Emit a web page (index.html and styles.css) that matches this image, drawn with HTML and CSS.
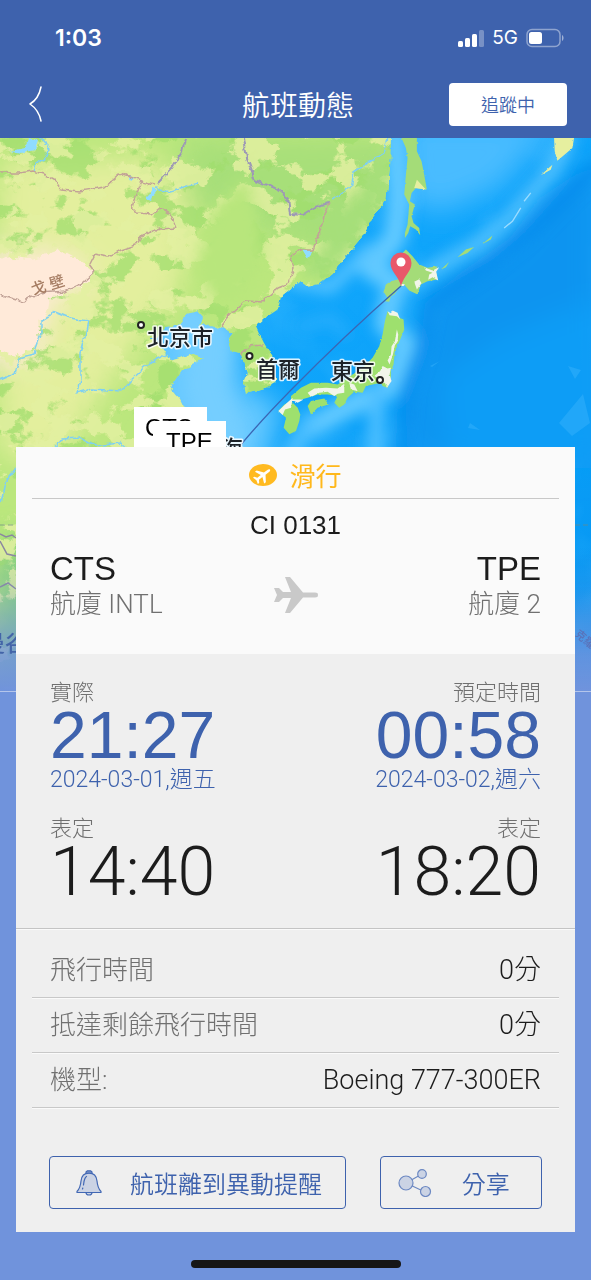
FILE: index.html
```html
<!DOCTYPE html>
<html lang="zh-Hant">
<head>
<meta charset="utf-8">
<meta name="viewport" content="width=device-width, initial-scale=1">
<title>航班動態</title>
<link rel="stylesheet" href="styles.css">
</head>
<body>
<div class="app">
  <header class="header">
    <div class="status-bar">
      <span class="clock">1:03</span>
      <div class="signals">
        <svg width="26" height="18" viewBox="0 0 26 18" fill="#fff" aria-hidden="true">
          <rect x="0" y="12" width="5" height="6" rx="1.5"/><rect x="7" y="9" width="5" height="9" rx="1.5"/><rect x="14" y="5" width="5" height="13" rx="1.5"/><rect x="21" y="1" width="5" height="17" rx="1.5" opacity=".3"/>
        </svg>
        <span class="network">5G</span>
        <svg width="38" height="20" viewBox="0 0 38 20" aria-hidden="true">
          <rect x="1" y="1.500" width="33" height="17" rx="5" fill="none" stroke="#fff" stroke-opacity=".42" stroke-width="1.500"/>
          <rect x="3" y="4" width="13" height="12" rx="2.500" fill="#fff"/>
          <path d="M36 7c2 1 2 5 0 6z" fill="#fff" opacity=".5"/>
        </svg>
      </div>
    </div>
    <div class="nav-bar">
      <button class="back" type="button" aria-label="返回">
        <svg width="14" height="36" viewBox="0 0 14 36" fill="none" stroke="#fff" stroke-width="1.500" stroke-linecap="round" stroke-linejoin="round" aria-hidden="true"><path d="M12 1C10.500 8.500 7 14.500 1 18c6 4 9.500 9.500 11 17"/></svg>
      </button>
      <h1 class="title">航班動態</h1>
      <button class="tracking" type="button">追蹤中</button>
    </div>
  </header>

  <main class="stage">
    <svg class="map" viewBox="0 0 591 554" preserveAspectRatio="xMidYMin slice" role="img" aria-label="航線地圖">
      <defs>
        <linearGradient id="sea" x1="0" y1="0" x2="1" y2="1"><stop offset="0" stop-color="#35b8ff"/><stop offset=".45" stop-color="#0fa5fb"/><stop offset="1" stop-color="#0596f2"/></linearGradient>
        <linearGradient id="fade" x1="0" y1="0" x2="0" y2="1"><stop offset="0" stop-color="#7093dc" stop-opacity="0"/><stop offset=".3" stop-color="#7093dc" stop-opacity=".2"/><stop offset=".75" stop-color="#7093dc" stop-opacity=".85"/><stop offset="1" stop-color="#7093dc"/></linearGradient>
        <filter id="soft" x="-30%" y="-30%" width="160%" height="160%"><feGaussianBlur stdDeviation="7"/></filter>
        <filter id="softer" x="-30%" y="-30%" width="160%" height="160%"><feGaussianBlur stdDeviation="14"/></filter>
        <filter id="rough" x="-5%" y="-5%" width="110%" height="110%"><feTurbulence type="fractalNoise" baseFrequency=".12" numOctaves="3" seed="4"/><feDisplacementMap in="SourceGraphic" scale="6" xChannelSelector="R" yChannelSelector="G"/></filter>
        <filter id="forest" x="0" y="0" width="100%" height="100%" color-interpolation-filters="sRGB"><feTurbulence type="fractalNoise" baseFrequency=".022 .03" numOctaves="5" seed="8"/><feColorMatrix values="0 0 0 0 .63  0 0 0 0 .87  0 0 0 0 .43  18 0 0 0 -9.700"/></filter>
        <filter id="meadow" x="0" y="0" width="100%" height="100%" color-interpolation-filters="sRGB"><feTurbulence type="fractalNoise" baseFrequency=".03 .04" numOctaves="5" seed="23"/><feColorMatrix values="0 0 0 0 .89  0 0 0 0 .94  0 0 0 0 .63  0 18 0 0 -9.800"/></filter>
        <filter id="shoals" x="0" y="0" width="100%" height="100%" color-interpolation-filters="sRGB"><feTurbulence type="fractalNoise" baseFrequency=".014" numOctaves="3" seed="5"/><feColorMatrix values="0 0 0 0 .3  0 0 0 0 .75  0 0 0 0 1  3 0 0 0 -1.600"/></filter>
        <clipPath id="land"><path d="M-9 -9H391L390 30 386 62 372 80 362 100 345 120 333 135 320 145 307 148 300 143 290 152 280 160 277 172 265 180 256 188 260 197 264 205 270 215 275 232 275 245 265 250 250 254 245 257 243 245 247 235 243 225 240 215 232 213 229 203 232 195 222 188 215 190 205 185 200 188 203 180 197 173 188 176 178 188 165 190 157 200 150 200 160 207 165 215 170 223 180 220 190 216 204 220 195 226 182 232 175 242 171 252 180 262 184 270 200 290 212 320 150 420 60 554H-9Z"/></clipPath>
      </defs>

      <rect width="591" height="554" fill="url(#sea)"/>
      <rect width="591" height="554" filter="url(#shoals)" opacity=".3"/>
      <g filter="url(#softer)">
        <path d="M400 -20H560L500 50 440 75 405 60Z" fill="#48bcff"/>
        <path d="M600 20 540 60 510 100 460 135 425 165 420 215 405 260 408 320H600Z" fill="#0c94f0"/>
        <path d="M440 240 500 200 600 160V330H450Z" fill="#0b9df6"/>
        <path d="M170 150 240 190 245 255 280 262 265 330 150 350 150 200Z" fill="#69caff"/>
      </g>
      <g filter="url(#soft)" fill="none" stroke-linecap="round" stroke-linejoin="round">
        <path d="M180 180 210 200 205 250 225 300" stroke="#74ceff" stroke-width="40"/>
        <path d="M395 0 400 60 395 100 370 130 395 145 385 185 405 205 388 250 345 270 310 290" stroke="#62c9ff" stroke-width="22"/>
        <path d="M568 0 550 35 510 80 480 105 445 125 410 145" stroke="#5cc5ff" stroke-width="16" opacity=".8"/>
        <path d="M600 25 540 85 490 125 430 165 422 210 408 250 402 320" stroke="#0686e9" stroke-width="10" opacity=".7"/>
        <path d="M291 142 330 150 370 110" stroke="#56c3ff" stroke-width="12"/>
        <path d="M378 250 375 320M310 280 290 320" stroke="#4dbfff" stroke-width="16"/>
        <path d="M300 190 330 180 345 195" stroke="#40b8ff" stroke-width="8" opacity=".6"/>
      </g>
      <g fill="#35b2fb" opacity=".5"><path d="M583 256 590 285 572 298 559 285ZM430 228 440 223 432 229ZM470 285 480 292 468 290ZM568 228 581 232 575 241Z"/></g>

      <g filter="url(#rough)"><g clip-path="url(#land)">
        <rect x="-9" y="-9" width="409" height="563" fill="#bbe77d"/>
        <g filter="url(#softer)">
          <path d="M0 20H150L190 60 180 150 120 230 60 320H0Z" fill="#e3ef9d"/>
          <path d="M180 0H400V150L300 110 190 70Z" fill="#a7df79"/>
          <path d="M-20 110 60 118 95 135 70 155 45 170 40 220 -20 230Z" fill="#ffe9d8"/>
          <path d="M0 400H60V560H0Z" fill="#86d27c"/>
        </g>
        <rect x="-9" y="-9" width="409" height="563" filter="url(#forest)" opacity=".75"/>
        <rect x="-9" y="-9" width="409" height="563" filter="url(#meadow)" opacity=".85"/>
        <path d="M-9 117 30 122 62 112 80 122 94 133 84 147 65 153 50 160 48 172 38 182 40 205 20 218 -9 210Z" fill="#ffead9" filter="url(#rough)"/>
        <path d="M385 55 395 5 370 40 345 65 320 80 325 110 300 130 315 142 345 120 370 85Z" fill="#a6df79" filter="url(#soft)"/>
        <path d="M215 70 245 40 258 80 262 130 240 160 215 165 195 130Z" fill="#b8e67c" filter="url(#soft)"/>
        <g fill="none" stroke="#7fd0f2" stroke-width="1.500" stroke-linejoin="round">
          <path d="M40 0 50 10 45 20 37 25 35 34M155 50 170 53 198 45M0 241 15 235 20 220 34 216 42 194 42 182 55 174 70 180 88 183 85 198 80 215 80 240 77 255 92 251 122 253 130 243 150 225 168 216M55 310 62 301 80 300 95 308 120 305 130 314M388 0 384 15 370 23 353 34 350 50 332 62M16 330 5 345 0 365"/>
        </g>
        <path d="M10 13 25 10 30 0 38 3 35 12 20 16ZM147 60 153 50 156 52 151 62ZM130 38 135 40 133 42 129 41ZM302 112 312 113 308 122Z" fill="#8fdcff"/>
        <g fill="none" stroke="#c2a397" stroke-width="1.500" stroke-linejoin="round">
          <path d="M0 35 20 35 33 33 43 36 55 42 61 51 80 53 105 49 120 36 130 39 142 43 155 46M142 43 134 62 132 70 137 75 152 76 160 70 170 76 176 90 160 91 142 97 135 107 120 112 108 119 95 116 90 126 95 133 82 145 65 153 40 155 23 164 0 157M222 188 232 175 246 162 263 163 277 150 287 146 294 130 291 118 300 112 313 112 322 85 329 65M240 217 250 208 263 207"/>
          <path d="M185 0 182 14 172 30 157 46M244 0 247 20 255 42 275 50 288 60 290 76 302 77 315 69 329 65" stroke="#9d99b5" stroke-width="2"/>
        </g>
      </g></g>

      <g transform="translate(291 0) scale(.333)">
        <g filter="url(#rough)" fill="#a4dc78">
          <path d="M332 0 345 30 350 60 345 110 340 170 355 200 350 260 342 285 342 300 352 285 358 265 375 275 388 292 385 270 368 255 362 235 372 200 357 190 362 165 375 150 408 155 400 110 392 70 378 40 378 0Z"/>
          <path d="M335 345 345 335 365 355 385 380 410 390 440 385 435 400 440 425 410 430 390 440 380 470 355 458 340 440 325 450 310 470 300 475 295 492 282 490 290 480 278 462 285 440 300 430 320 425 335 420 340 380Z"/>
          <path fill="#9ee06e" d="M290 520 300 530 315 525 325 540 338 545 340 575 328 605 312 640 308 680 300 700 300 720 290 750 275 745 270 735 225 745 215 765 190 762 170 780 160 800 145 810 130 795 140 775 110 770 80 770 50 780 20 788 0 790 0 775 30 750 60 735 110 735 140 740 170 720 215 690 245 660 265 625 275 590 282 550Z"/>
          <path fill="#9ee06e" d="M60 790 100 782 113 800 80 810 60 830 50 805ZM0 790 20 810 28 830 25 850 15 880 -5 890 -22 870 -15 840 -38 820 -20 800Z"/>
          <path d="M575 318 605 293 600 305ZM500 358 525 335 550 327 530 345ZM450 395 475 372 465 388Z"/>
          <path fill="#e6ef9f" d="M790 0H850L845 30 800 68 792 40ZM750 112 785 80 780 95ZM370 150 378 125 405 155Z"/>
          <path fill="#f2f5ea" d="M400 388 425 398 445 388 436 402 442 428 425 418 412 426 415 410 425 405 405 398ZM370 432 385 424 392 436 385 445 378 455ZM268 700 275 685 290 692 300 690 296 710 302 730 288 750 282 735 270 738 265 722 250 715ZM318 575 322 590 320 612 312 622 306 650 296 680 290 668 300 650 302 625 312 610ZM290 520 300 526 305 518 320 525 328 545 318 535 296 532ZM50 765 70 752 105 750 140 752 160 738 160 765 140 768 130 775 110 762 85 765 60 778ZM175 735 190 740 200 760 180 755ZM0 785 38 785 20 795ZM-38 820 -15 798 5 780 0 810 -18 815 -25 832ZM328 435 342 440 335 448Z"/>
        </g>
        <path d="M640 270 665 250 690 210M700 190 720 165" fill="none" stroke="#9bdcff" stroke-width="4"/>
      </g>

      <path d="M401 148 Q344 198 291 252 T216 340" fill="none" stroke="#3a66b4" stroke-width="1.300"/>
      <path d="M401 148C398 137 390.500 134 390.500 125a10.500 10.500 0 0 1 21 0c0 9-7.500 12-10.500 23Z" fill="#e9586a"/><circle cx="401" cy="124" r="4.500" fill="#fff"/>

      <g class="city">
        <text x="147" y="207">北京市</text><text x="256" y="239">首爾</text><text x="331" y="241">東京</text><text x="221" y="318">海</text>
      </g>
      <g fill="#fff" stroke="#222" stroke-width="2"><circle cx="141" cy="187" r="3"/><circle cx="249.500" cy="218" r="3"/><circle cx="380" cy="242" r="3"/></g>
      <text class="region" transform="translate(33 157) rotate(-17)" x="0 19" y="0">戈壁</text>
      <g class="airport">
        <rect x="134" y="269" width="73" height="50"/><text x="145" y="298">CTS</text>
        <rect x="153" y="283" width="73" height="50"/><text x="166" y="312">TPE</text>
      </g>
      <path d="M0 387H16M575 387H591" stroke="#6e8a84" stroke-dasharray="5 3" opacity=".7"/>
      <path d="M0 396 6 399 12 397 16 400M0 403 7 416 16 418M0 449 8 445 16 451" fill="none" stroke="#8b87a0" stroke-width="1.500"/>
      <rect y="410" width="591" height="144" fill="url(#fade)"/>
      <text class="sea-label" x="-17" y="513">曼谷</text>
      <text class="sea-label-small" transform="translate(574 497) rotate(40)">克羅</text>
      <path d="M0 553.500H591" stroke="#b4c5eb"/>
    </svg>

    <article class="card">
      <section class="summary">
        <p class="flight-status">
          <svg width="28" height="22" viewBox="0 0 28 22" aria-hidden="true"><ellipse cx="14" cy="11" rx="14" ry="11" fill="#ffba20"/><path transform="translate(14 11) rotate(-38) scale(.44)" fill="#fff" d="M20 0c0-2-2-3-4-3H5L-5-17h-5L-4-3h-10l-4-6h-4l3 9-3 9h4l4-6h10l-6 14h5L5 3h11c2 0 4-1 4-3Z"/></svg>
          滑行
        </p>
        <p class="flight-no">CI 0131</p>
        <div class="route">
          <div><p class="code">CTS</p><p class="terminal">航廈 INTL</p></div>
          <svg class="plane" width="44" height="36" viewBox="0 0 44 36" fill="#c9c9c9" aria-hidden="true"><path d="M44 18c0-1.800-1-2.500-3-2.500H29L16 0h-5l6 15H9L5 11H0l3 7-3 7h5l4-4h8l-6 15h5l13-15.500h12c2 0 3-.7 3-2.500Z"/></svg>
          <div class="end"><p class="code">TPE</p><p class="terminal">航廈 2</p></div>
        </div>
      </section>

      <section class="times">
        <div>
          <p class="label">實際</p><p class="time actual">21:27</p><p class="date">2024-03-01,週五</p>
          <p class="label">表定</p><p class="time">14:40</p>
        </div>
        <div class="end">
          <p class="label">預定時間</p><p class="time actual">00:58</p><p class="date">2024-03-02,週六</p>
          <p class="label">表定</p><p class="time">18:20</p>
        </div>
      </section>

      <dl class="details">
        <div class="detail"><dt>飛行時間</dt><dd>0分</dd></div>
        <div class="detail"><dt>抵達剩餘飛行時間</dt><dd>0分</dd></div>
        <div class="detail"><dt>機型:</dt><dd>Boeing 777-300ER</dd></div>
      </dl>

      <div class="actions">
        <button class="action remind" type="button">
          <svg width="26" height="26" viewBox="0 0 26 26" fill="#cbd3e4" stroke="#4268b4" stroke-width="1.200" stroke-linejoin="round" stroke-linecap="round" aria-hidden="true"><path d="M10 3.500V2l1.500-1.200h3L16 2v1.500Z" fill="#8298c8"/><path d="M10 22.500a3 2.500 0 0 0 6 0Z"/><path d="M13 3.200c-5 0-7.500 3-8 7.800-.4 4.500-1 7.500-4 10.500v1h24v-1c-3-3-3.600-6-4-10.500-.5-4.800-3-7.800-8-7.800Z"/><path d="M10.500 6.500C8 8 8 12 7.500 15M6.800 18l-.3 1" fill="none"/></svg>
          <span>航班離到異動提醒</span>
        </button>
        <button class="action share" type="button">
          <svg width="34" height="28" viewBox="0 0 34 28" fill="#cbd3e4" stroke="#6c88c2" stroke-width="1.200" aria-hidden="true"><path d="M8 14 24 5M8 14 27 23"/><circle cx="8" cy="14" r="7"/><circle cx="24" cy="5" r="4.300"/><circle cx="27.500" cy="22.500" r="5"/></svg>
          <span>分享</span>
        </button>
      </div>
    </article>
  </main>
  <div class="home-indicator"></div>
</div>
</body>
</html>
```

FILE: styles.css
```css
* { box-sizing: border-box; }

body, h1, p, dl, dd { margin: 0; }

body {
  background: #7093dc;
  color: #1c1c1c;
  font-family: "Liberation Sans", "Noto Sans CJK TC", sans-serif;
}

button {
  padding: 0;
  border: 0;
  background: none;
  font-family: inherit;
  cursor: pointer;
}

svg { flex: none; }

.app {
  min-height: 100vh;
  display: flex;
  flex-direction: column;
}

.header {
  background: #3e62ad;
  color: #fff;
}

.status-bar {
  display: flex;
  align-items: center;
  justify-content: space-between;
  height: 76px;
  padding: 0 27px 0 55px;
}

.clock {
  font: 600 23px/28px Inter, sans-serif;
}

.signals {
  display: flex;
  align-items: center;
  gap: 8px;
}

.network {
  font: 400 19px/24px Inter, sans-serif;
}

.nav-bar {
  display: grid;
  grid-template-columns: 1fr auto 1fr;
  align-items: center;
  height: 62px;
  padding: 0 24px 6px 29px;
}

.back {
  justify-self: start;
  display: flex;
}

.title {
  font: 350 28px/40px "Noto Sans CJK TC", sans-serif;
}

.tracking {
  justify-self: end;
  width: 118px;
  height: 43px;
  border-radius: 4px;
  background: #fff;
  color: #3e62ad;
  font: 350 18px/24px "Noto Sans CJK TC", sans-serif;
}

.stage {
  display: grid;
  grid-template-columns: minmax(0, 1fr);
  align-items: start;
}

.map, .card { grid-area: 1 / 1; }

.map {
  display: block;
  width: 100%;
  height: 554px;
}

.city text {
  font: 500 22px "Noto Sans CJK TC", sans-serif;
  fill: #1d2228;
  stroke: #fff;
  stroke-width: 3px;
  stroke-linejoin: round;
  stroke-opacity: 0.85;
  paint-order: stroke;
}

.region {
  font: 500 15px "Noto Sans CJK TC", sans-serif;
  fill: #a57c62;
}

.airport rect { fill: #fff; }

.airport text { font: 24px "Liberation Sans", sans-serif; }

.sea-label {
  font: 500 22px "Noto Sans CJK TC", sans-serif;
  fill: #4364a8;
}

.sea-label-small {
  font: 500 11px "Noto Sans CJK TC", sans-serif;
  fill: #5b72b8;
}

.card {
  margin: 309px 16px 0;
  background: #efefef;
}

.summary {
  padding-bottom: 35px;
  background: #fafafa;
}

.flight-status {
  display: flex;
  align-items: center;
  justify-content: center;
  gap: 12px;
  margin: 0 16px;
  padding: 10px 0 6px;
  border-bottom: 1px solid #c8c8c8;
  color: #ffb81c;
  font: 400 26px/35px "Noto Sans CJK TC", sans-serif;
}

.flight-no {
  margin-top: 10px;
  font-size: 26px;
  line-height: 32px;
  text-align: center;
}

.route {
  display: grid;
  grid-template-columns: 1fr auto 1fr;
  align-items: end;
  margin-top: 8px;
  padding: 0 34px;
}

.end { text-align: right; }

.code {
  font-size: 33px;
  line-height: 40px;
}

.plane { margin-bottom: 6px; }

.terminal {
  color: #707070;
  font: 300 26px/30px Roboto, "Noto Sans CJK TC", sans-serif;
}

.times {
  display: flex;
  justify-content: space-between;
  padding: 22px 34px 28px;
  border-bottom: 1px solid #c4c4c4;
}

.label {
  padding-bottom: 4px;
  color: #707070;
  font: 300 22px/28px "Noto Sans CJK TC", sans-serif;
}

.time {
  font: 300 68px/56px Roboto, sans-serif;
}

.time.actual {
  color: #3e62ad;
  font: 400 66px/54px "Liberation Sans", sans-serif;
}

.date {
  margin-bottom: 14px;
  color: #3e62ad;
  font: 300 23px/36px Roboto, "Noto Sans CJK TC", sans-serif;
}

.details {
  padding: 13px 16px 0;
  border-top: 1px solid #fafafa;
}

.detail {
  display: flex;
  justify-content: space-between;
  padding: 0 18px;
  border-bottom: 1px solid #c8c8c8;
  box-shadow: 0 1px #fafafa;
  font: 300 26px/54px Roboto, "Noto Sans CJK TC", sans-serif;
}

.detail dt {
  color: #707070;
}

.detail dd {
  font-size: 27px;
}

.actions {
  display: grid;
  grid-template-columns: 296fr 162fr;
  gap: 34px;
  padding: 48px 33px 23px;
}

.action {
  display: flex;
  align-items: center;
  height: 53px;
  border: 1px solid #3e62ad;
  border-radius: 4px;
  color: #3e62ad;
  font: 350 24px/32px "Noto Sans CJK TC", sans-serif;
}

.remind {
  gap: 28px;
  padding-left: 26px;
}

.share {
  gap: 30px;
  padding-left: 17px;
}

.home-indicator {
  align-self: center;
  width: 210px;
  height: 8px;
  margin: auto 0 12px;
  border-radius: 4px;
  background: #161616;
}
```
